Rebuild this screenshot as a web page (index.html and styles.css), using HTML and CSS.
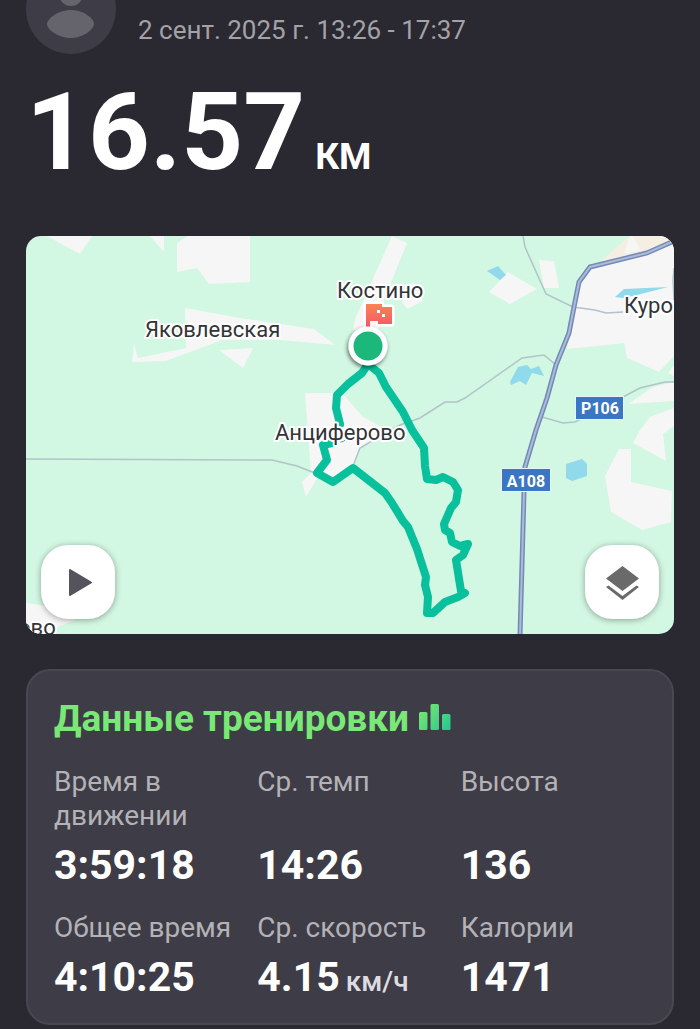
FILE: index.html
```html
<!DOCTYPE html>
<html lang="ru">
<head>
<meta charset="utf-8">
<meta name="viewport" content="width=device-width, initial-scale=1">
<title>Тренировка</title>
<link rel="stylesheet" href="styles.css">
</head>
<body>
<main class="workout">
  <header class="profile">
    <svg class="avatar" viewBox="0 0 90 90" aria-hidden="true">
      <circle cx="45" cy="45" r="45" fill="#3e3c46"/>
      <circle cx="45" cy="30" r="12" fill="#65636b"/>
      <path d="M21 60C21 55 32 46 45 46S68 55 68 60S57 74 45 74S21 66 21 60Z" fill="#65636b"/>
    </svg>
    <time class="date">2 сент. 2025 г. 13:26 - 17:37</time>
  </header>

  <h1 class="distance"><span class="distance-value">16.57</span> <span class="distance-unit">КМ</span></h1>

  <section class="map" aria-label="Карта маршрута">
    <svg class="map-canvas" viewBox="26 236 648 398">
      <rect x="26" y="236" width="648" height="399" fill="#d2f7e2"/>
      <g fill="#f6f6f7">
        <path d="M47 236L80 254L92 236Z"/>
        <path d="M150 236L164 252V236Z"/>
        <path d="M188 236L177 243V272L197 268L209 284L250 282V236Z"/>
        <path d="M185 308L240 318L314 329L335 345L280 340L222 340L166 361L132 362L134 344L138 358L186 348Z"/>
        <path d="M219 350L253 348L243 368Z"/>
        <path d="M392 236L407 243L384 300L378 330L353 330L355 319Z"/>
        <path d="M402 302L407 309L423 301L413 282Z"/>
        <path d="M305 393H342L363 417L382 427L372 443L360 448L353 466L333 480L318 477L306 497L302 482L311 473Z"/>
        <path d="M589 268L674 242V356L659 372L627 358L624 343L567 349L578 282Z"/>
        <path d="M674 365L668 373L674 376Z"/>
        <path d="M628 404L653 387L674 382V401Z"/>
        <path d="M640 430L650 417L674 408V426L663 434L666 461L633 443Z"/>
        <path d="M619 449H631V482L672 491L671 522L642 530L611 512L605 476Z"/>
        <path d="M508 272L537 289L510 304L489 292Z"/>
        <path d="M539 260L554 261L559 288L544 288Z"/>
        <path d="M26 603L50 606L75 620L50 630V635H26Z"/>
      </g>
      <path d="M600 262L627 238L630 236H674V241L647 251Z" fill="#f5eee2"/>
      <path d="M630 236L624 254L640 250L633 236Z" fill="#f6f6f7"/>
      <g fill="#90daec">
        <path d="M487 271L498 266L506 275L500 280Z"/>
        <path d="M615 297L624 289L668 287L637 295L623 298Z"/>
        <path d="M510 382L518 367L527 365L531 369L539 366L544 376L532 373L526 385L520 381L511 385Z"/>
        <path d="M566 464L582 459L587 464V476L572 481L566 478Z"/>
      </g>
      <g fill="none" stroke="#b1c4ca" stroke-width="1.5">
        <path d="M523 236L525 247L546 294L573 307L595 310L606 313L623 312"/>
        <path d="M556 365L544 355L522 358L465 398L457 402H445L420 418L400 425L372 441L360 448L353 466"/>
        <path d="M542 417L563 423L575 422L623 397L640 388L665 382H674"/>
        <path d="M26 459L272 460L297 466L315 473"/>
        <path d="M674 268L673 280L674 300"/>
      </g>
      <path class="highway-edge" d="M674 241L647 253L590 267L579 282L574 307L569 333L556 365L547 398L536 430L525 467L524 492L520 636"/>
      <path class="highway-core" d="M674 241L647 253L590 267L579 282L574 307L569 333L556 365L547 398L536 430L525 467L524 492L520 636"/>

      <path class="route" d="M340 424L336 408L337 395L348 384L362 373L368 364L379 373L386 387L403 412L412 430L424 448L425 466L427 479L436 480L443 477L453 482L458 490L456 502L451 508L444 524L445 530L450 533L452 542L460 546L468 544L463 555L456 560L461 591L465 593L458 597L445 602L433 613L427 613L428 597L425 585L426 577L417 549L408 527L403 521L392 503L385 493L353 468L333 482L317 473L327 460L323 445L332 443"/>
      <path d="M340 442Q344 442 345 440" fill="none" stroke="#08c09b" stroke-width="1"/>

      <g class="place">
        <text x="337" y="298">Костино</text>
        <text x="145" y="337">Яковлевская</text>
        <text x="275" y="440">Анциферово</text>
        <text x="624" y="313">Куро</text>
        <text x="18" y="635">ово</text>
      </g>
      <g>
        <rect x="575" y="396" width="49" height="24" fill="#e6f4fa"/>
        <rect x="576" y="397" width="47" height="22" fill="#3b76c4"/>
        <text class="shield" x="600" y="414">Р106</text>
        <rect x="501" y="468" width="50" height="24" fill="#e6f4fa"/>
        <rect x="502" y="469" width="48" height="22" fill="#3b76c4"/>
        <text class="shield" x="526" y="487">А108</text>
      </g>

      <defs>
        <linearGradient id="flag" x1="0" y1="0" x2="0" y2="1">
          <stop offset="0" stop-color="#fb8352"/>
          <stop offset="1" stop-color="#f14c6d"/>
        </linearGradient>
        <filter id="shade" x="-50%" y="-50%" width="200%" height="200%">
          <feDropShadow dx="-1" dy="2" stdDeviation="2" flood-color="#000" flood-opacity=".6"/>
        </filter>
      </defs>
      <path d="M366 304H382V307H392V324H378V321H370V334H366Z" fill="#fff" stroke="#fff" stroke-width="5" stroke-linejoin="round"/>
      <path d="M366 304H382V307H392V324H378V321H370V334H366Z" fill="url(#flag)"/>
      <path d="M377 310h3v3h-3zM382 314h3v3h-3z" fill="#fff"/>
      <circle cx="368" cy="346" r="19.5" fill="#fff" filter="url(#shade)"/>
      <circle cx="368" cy="346" r="14.5" fill="#1cb77b"/>
    </svg>
    <button class="map-button map-button-play" type="button" aria-label="Воспроизвести">
      <svg viewBox="0 0 74 74" aria-hidden="true"><path d="M29 25V50L50 37.500Z" fill="#55545d" stroke="#55545d" stroke-width="2" stroke-linejoin="round"/></svg>
    </button>
    <button class="map-button map-button-layers" type="button" aria-label="Слои">
      <svg viewBox="0 0 74 74" aria-hidden="true"><path d="M37.500 21L54 33.500L37.500 46L21 33.500ZM21 42L23.500 40.500L37.500 51L51.500 40.500L54 42L37.500 55Z" fill="#6a6a6a"/></svg>
    </button>
  </section>

  <section class="card">
    <h2 class="card-title">Данные тренировки
      <svg class="bars" viewBox="0 0 32 26" aria-hidden="true">
        <defs><linearGradient id="bars" gradientUnits="userSpaceOnUse" x1="0" y1="4" x2="26" y2="26"><stop offset="0" stop-color="#7ce872"/><stop offset="1" stop-color="#30c98b"/></linearGradient></defs>
        <g fill="url(#bars)"><rect y="8" width="8.500" height="18" rx="1.500"/><rect x="11.500" width="8.500" height="26" rx="1.500"/><rect x="23" y="10" width="8.500" height="16" rx="1.500"/></g>
      </svg>
    </h2>
    <dl class="stats">
      <div class="stat"><dt>Время в движении</dt><dd>3:59:18</dd></div>
      <div class="stat"><dt>Ср. темп</dt><dd>14:26</dd></div>
      <div class="stat"><dt>Высота</dt><dd>136</dd></div>
      <div class="stat"><dt>Общее время</dt><dd>4:10:25</dd></div>
      <div class="stat"><dt>Ср. скорость</dt><dd>4.15<span class="unit">км/ч</span></dd></div>
      <div class="stat"><dt>Калории</dt><dd>1471</dd></div>
    </dl>
  </section>
</main>
</body>
</html>
```

FILE: styles.css
```css
* {
  box-sizing: border-box;
}

body {
  margin: 0;
  background: #2a2831;
  color: #fff;
  font-family: Roboto, "Noto Sans", sans-serif;
}

.workout {
  padding: 0 26px 4px;
  overflow: hidden;
}

.profile {
  display: flex;
  align-items: flex-end;
  gap: 22px;
  margin-top: -36px;
}

.avatar {
  width: 90px;
  height: 90px;
}

.date {
  padding-bottom: 8px;
  color: #a3a2a7;
  font-size: 26px;
  line-height: 32px;
}

.distance {
  display: flex;
  align-items: baseline;
  gap: 10px;
  margin: 24px 0 49px;
}

.distance-value {
  font-size: 108px;
  line-height: 109px;
}

.distance-unit {
  font-size: 37px;
  line-height: 44px;
}

.map {
  position: relative;
  overflow: hidden;
  border-radius: 15px;
}

.map-canvas {
  display: block;
  width: 100%;
}

.highway-edge {
  fill: none;
  stroke: #7389b6;
  stroke-width: 5;
}

.highway-core {
  fill: none;
  stroke: #acbbd8;
  stroke-width: 2;
}

.route {
  fill: none;
  stroke: #08c09b;
  stroke-width: 8;
  stroke-linecap: round;
  stroke-linejoin: round;
}

.place {
  fill: #333439;
  stroke: #fff;
  stroke-width: 4;
  stroke-linejoin: round;
  paint-order: stroke;
  font-size: 22px;
}

.shield {
  fill: #fff;
  font-size: 16px;
  font-weight: 700;
  text-anchor: middle;
}

.map-button {
  position: absolute;
  bottom: 15px;
  width: 74px;
  height: 74px;
  padding: 0;
  border: 0;
  border-radius: 27px;
  background: #fff;
  box-shadow: 0 1px 6px rgb(0 0 0 / 35%);
}

.map-button svg {
  display: block;
}

.map-button-play {
  left: 15px;
}

.map-button-layers {
  right: 15px;
}

.card {
  margin-top: 35px;
  padding: 26px 8px 22px 26px;
  border: 2px solid #494751;
  border-radius: 24px;
  background: #3e3c46;
}

.card-title {
  display: flex;
  align-items: center;
  gap: 10px;
  margin: 0 0 24px;
  color: #7ae876;
  font-size: 37px;
  line-height: 44px;
}

.bars {
  width: 32px;
  height: 26px;
  margin-bottom: 4px;
}

.stats {
  display: grid;
  grid-template-columns: repeat(3, 1fr);
  row-gap: 22px;
  margin: 0;
}

.stat {
  display: flex;
  flex-direction: column;
  justify-content: space-between;
  gap: 8px;
}

.stat dt {
  color: #b3b2b7;
  font-size: 28px;
  line-height: 34px;
}

.stat dd {
  margin: 0;
  font-size: 41px;
  font-weight: 700;
  line-height: 48px;
}

.stat .unit {
  margin-left: 6px;
  color: #dddce0;
  font-size: 28px;
  font-weight: 500;
  line-height: 34px;
}
```
